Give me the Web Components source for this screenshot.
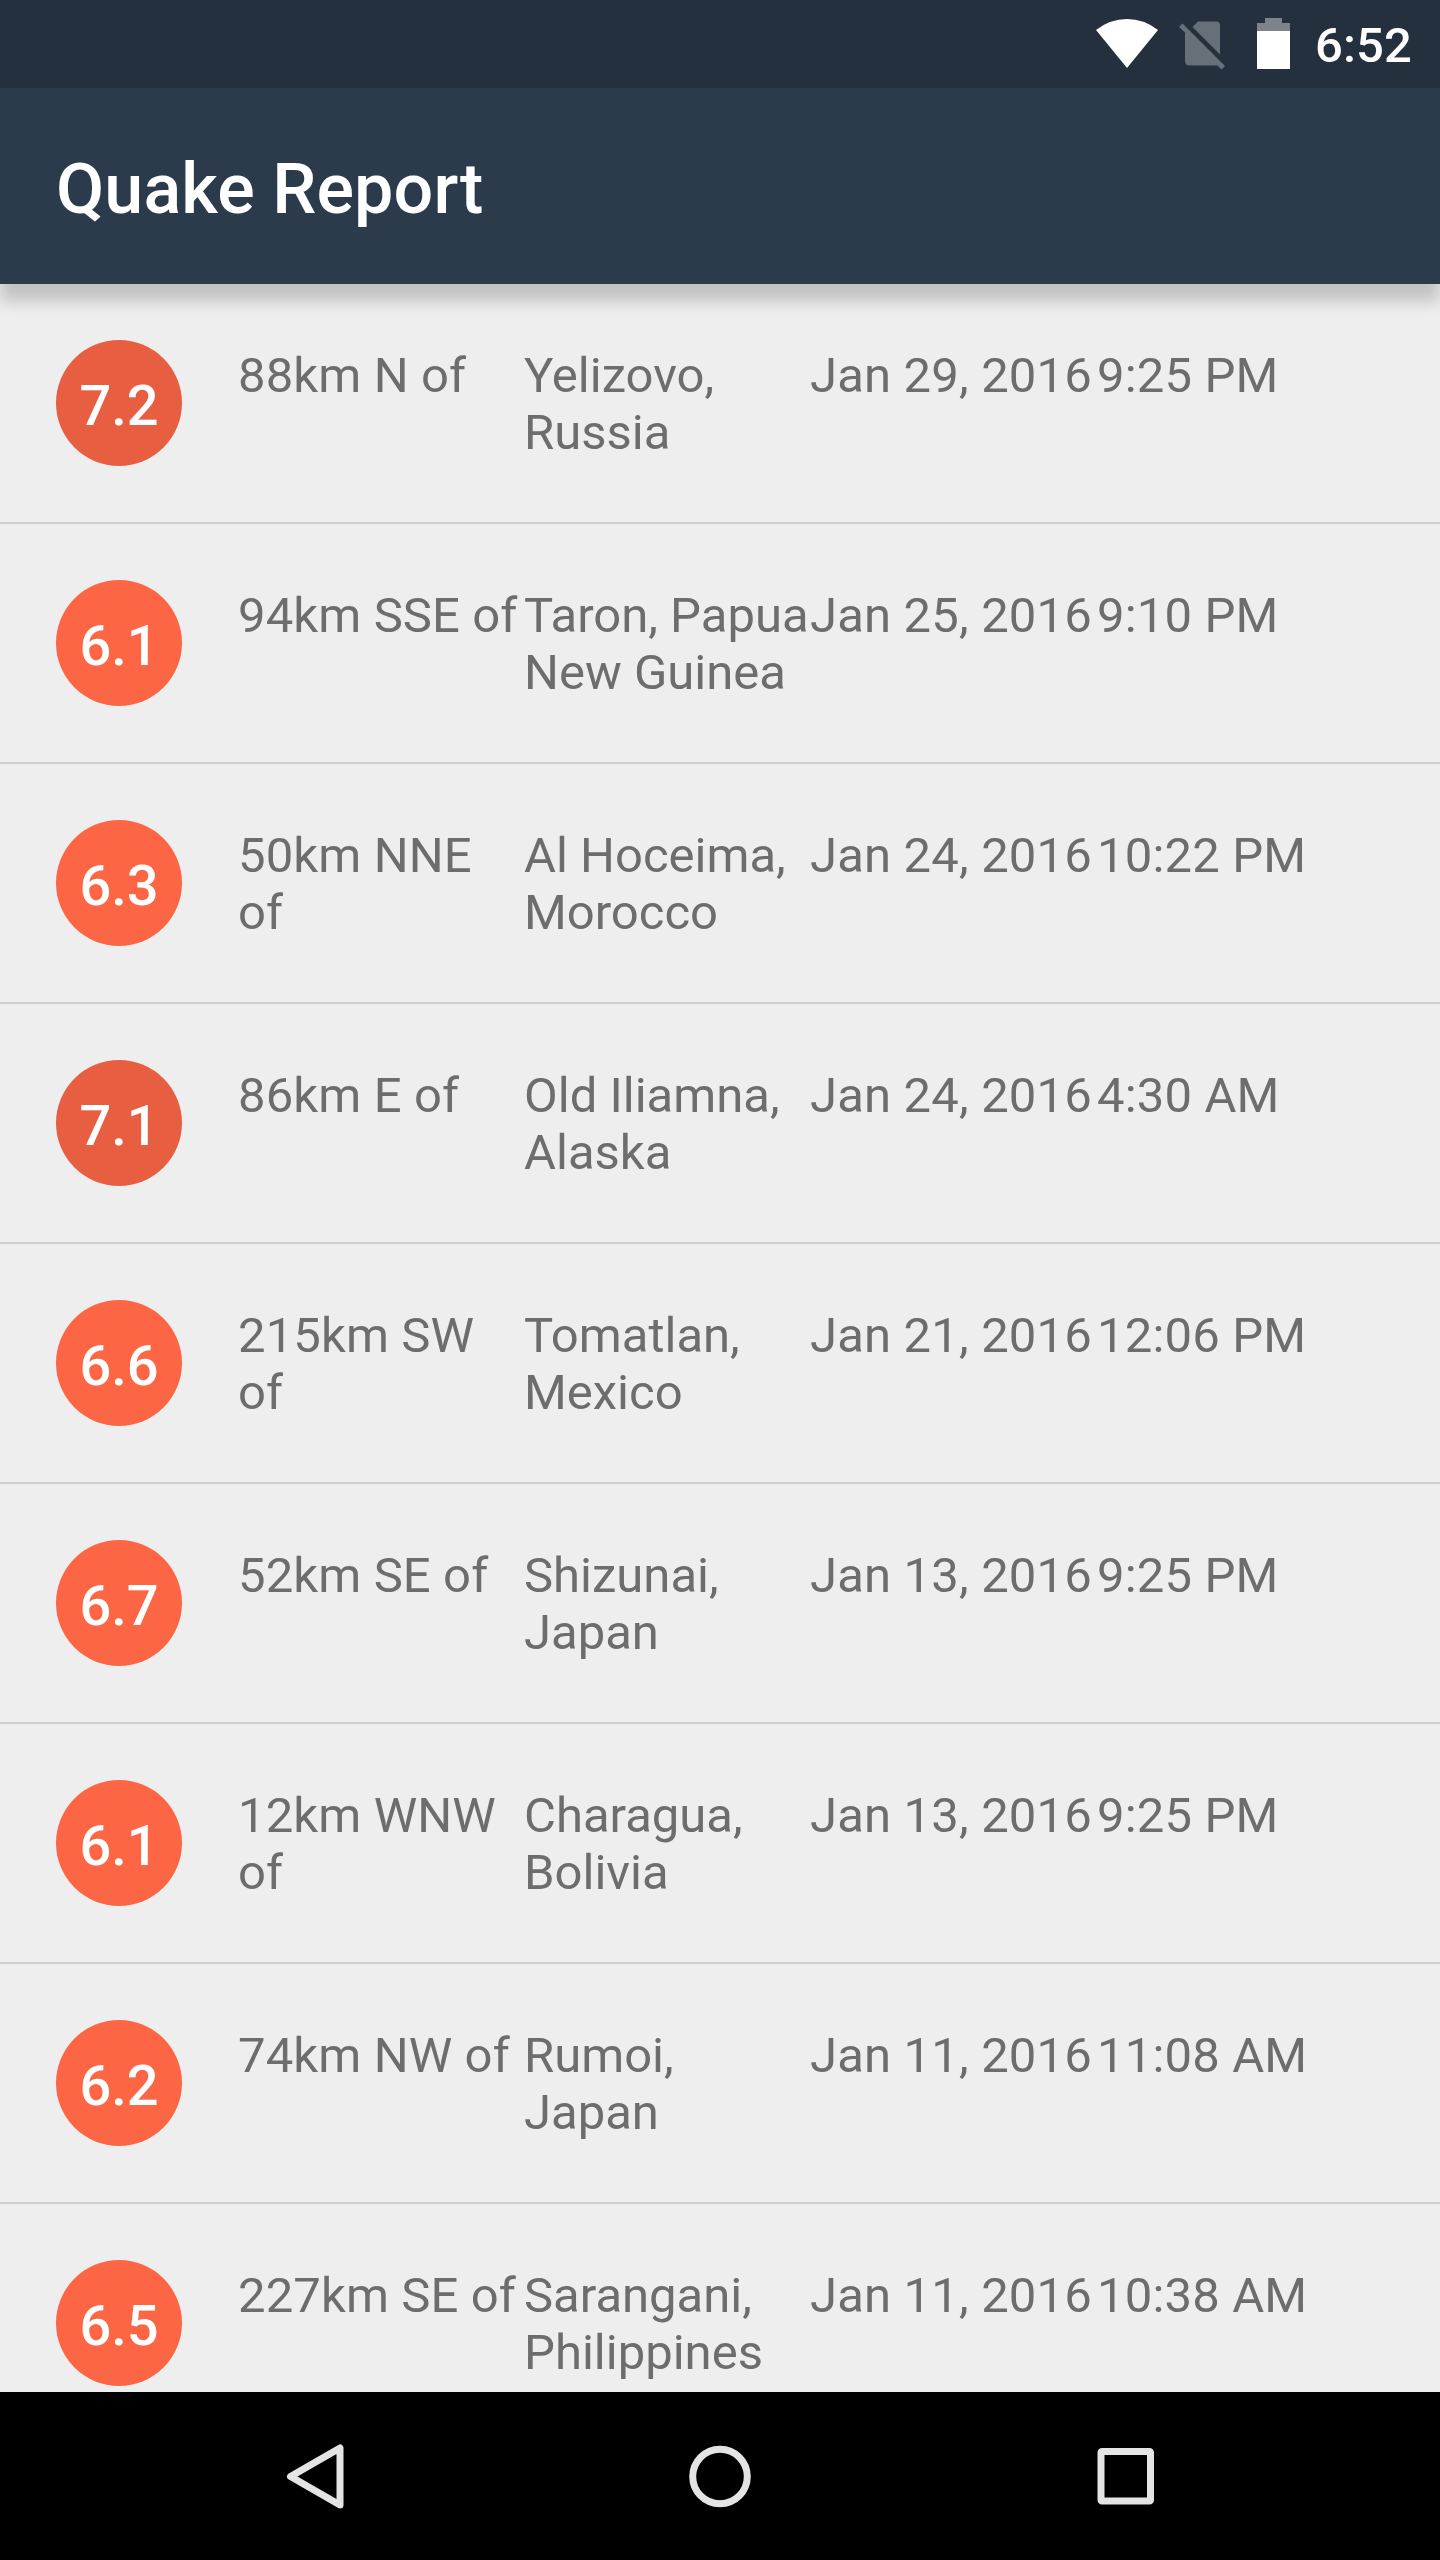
<!DOCTYPE html>
<html lang="en">
<head>
<meta charset="utf-8">
<title>Quake Report</title>
<style>
  html, body { margin: 0; padding: 0; }
  body { font-family: Roboto, "Noto Sans", sans-serif; background: #eee; }
</style>
</head>
<body>
<quake-app></quake-app>
<script>
class StatusBar extends HTMLElement {
  constructor() {
    super();
    this.attachShadow({ mode: 'open' }).innerHTML = `
      <style>
        :host { display: flex; justify-content: flex-end; height: 88px; background: #24303d; color: #fff; flex: none; padding-right: 28px; box-sizing: border-box; }
        svg { display: block; flex: none; }
        .time { font-size: 49px; font-weight: 500; line-height: 58px; padding-top: 17px; width: 97px; white-space: nowrap; letter-spacing: .1px; }
      </style>
      <svg width="220" height="88" viewBox="1095 0 220 88">
        <path fill="#fff" d="M1096 30Q1110 19 1127 19Q1144 19 1158 30L1127 68Z"/>
        <g fill="#667079">
          <path d="M1192.5 27L1198 21.5H1216Q1220 21.500 1220 25.500V54.500Z"/>
          <path d="M1179 27L1182.500 23.500L1225 66L1221.500 69.500L1217.500 65.500H1189.500Q1185 65.500 1185 61V32.500Z"/>
        </g>
        <path fill="#7c838b" d="M1257 31V23H1265V18H1282V23H1290V31Z"/>
        <path fill="#fff" d="M1257 31H1290V69H1257Z"/>
      </svg>
      <div class="time"><slot></slot></div>`;
  }
}
customElements.define('status-bar', StatusBar);

class AppBar extends HTMLElement {
  constructor() {
    super();
    this.attachShadow({ mode: 'open' }).innerHTML = `
      <style>
        :host { display: flex; align-items: center; height: 196px; flex: none; padding: 6px 56px 0; box-sizing: border-box; background: #2b3b4b; color: #fff; font-size: 70px; font-weight: 500; line-height: 82px; letter-spacing: .12px; position: relative; z-index: 1; box-shadow: 0 17px 15px rgba(0,0,0,.19); }
      </style><slot></slot>`;
  }
}
customElements.define('app-bar', AppBar);

class QuakeRow extends HTMLElement {
  connectedCallback() {
    const a = n => this.getAttribute(n);
    this.attachShadow({ mode: 'open' }).innerHTML = `
      <style>
        :host { display: flex; gap: 56px; flex: none; height: 240px; padding: 56px 56px 0; box-sizing: border-box; border-bottom: 2px solid #cfcfcf; }
        .mag { width: 126px; height: 126px; flex: none; box-sizing: border-box; padding-top: 5px; border-radius: 50%; background: ${parseFloat(a('mag')) >= 7 ? '#e75f40' : '#fc6644'}; color: #fff; font-size: 56px; font-weight: 500; display: flex; align-items: center; justify-content: center; }
        .cols { flex: 1; display: grid; grid-template-columns: 286px 286px 287px 287px; min-width: 0; padding-top: 7px; color: #6d6d6d; font-size: 49px; line-height: 57px; letter-spacing: .12px; }
        .place { letter-spacing: 0; white-space: nowrap; }
        .nowrap { white-space: nowrap; letter-spacing: .17px; }
      </style>
      <div class="mag">${a('mag')}</div>
      <div class="cols"><div>${a('offset')}</div><div class="place">${a('place')}</div><div class="nowrap">${a('date')}</div><div class="nowrap">${a('time')}</div></div>`;
  }
}
customElements.define('quake-row', QuakeRow);

class NavBar extends HTMLElement {
  constructor() {
    super();
    this.attachShadow({ mode: 'open' }).innerHTML = `
      <style>
        :host { display: flex; justify-content: center; align-items: center; height: 168px; flex: none; gap: 322px; background: #000; }
        svg { display: block; width: 84px; height: 84px; fill: none; stroke: #e4e4e4; stroke-width: 7; stroke-linejoin: round; }
      </style>
      <svg viewBox="272 2434 84 84"><path d="M340 2448V2505L290.500 2476.500Z"/></svg>
      <svg viewBox="678 2434 84 84"><circle cx="720" cy="2476.500" r="27.300"/></svg>
      <svg viewBox="1084 2434 84 84"><rect x="1101" y="2451.500" width="49.500" height="49.500" rx="1"/></svg>`;
  }
}
customElements.define('nav-bar', NavBar);

const QUAKES = [
  ['7.2', '88km N of', 'Yelizovo,<br>Russia', 'Jan 29, 2016', '9:25 PM'],
  ['6.1', '94km SSE of', 'Taron, Papua<br>New Guinea', 'Jan 25, 2016', '9:10 PM'],
  ['6.3', '50km NNE<br>of', 'Al Hoceima,<br>Morocco', 'Jan 24, 2016', '10:22 PM'],
  ['7.1', '86km E of', 'Old Iliamna,<br>Alaska', 'Jan 24, 2016', '4:30 AM'],
  ['6.6', '215km SW<br>of', 'Tomatlan,<br>Mexico', 'Jan 21, 2016', '12:06 PM'],
  ['6.7', '52km SE of', 'Shizunai,<br>Japan', 'Jan 13, 2016', '9:25 PM'],
  ['6.1', '12km WNW<br>of', 'Charagua,<br>Bolivia', 'Jan 13, 2016', '9:25 PM'],
  ['6.2', '74km NW of', 'Rumoi,<br>Japan', 'Jan 11, 2016', '11:08 AM'],
  ['6.5', '227km SE of', 'Sarangani,<br>Philippines', 'Jan 11, 2016', '10:38 AM']
];

class QuakeApp extends HTMLElement {
  constructor() {
    super();
    this.attachShadow({ mode: 'open' }).innerHTML = `
      <style>
        :host { display: flex; flex-direction: column; width: 1440px; height: 2560px; overflow: hidden; background: #eee; }
        .list { flex: 1; min-height: 0; overflow: hidden; display: flex; flex-direction: column; }
      </style>
      <status-bar>6:52</status-bar>
      <app-bar>Quake Report</app-bar>
      <div class="list">${QUAKES.map(q => `<quake-row mag="${q[0]}" offset="${q[1]}" place="${q[2]}" date="${q[3]}" time="${q[4]}"></quake-row>`).join('')}</div>
      <nav-bar></nav-bar>`;
  }
}
customElements.define('quake-app', QuakeApp);
</script>
</body>
</html>
